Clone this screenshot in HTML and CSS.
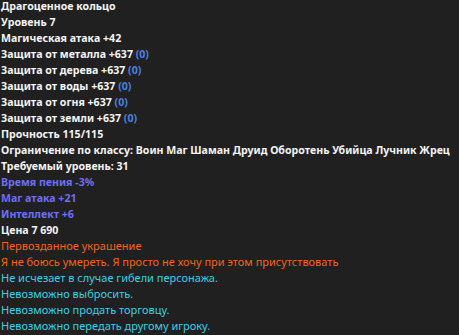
FILE: index.html
```html
<!DOCTYPE html>
<html lang="ru">
<head>
  <meta charset="UTF-8" />
  <title>Драгоценное кольцо</title>
  <link rel="stylesheet" href="styles.css">
</head>
<body>
  <div class="tooltip">
    <p class="b">Драгоценное кольцо</p>
    <p class="b">Уровень 7</p>
    <p class="b">Магическая атака +42</p>
    <p class="b">Защита от металла +637 <span class="add">(0)</span></p>
    <p class="b">Защита от дерева +637 <span class="add">(0)</span></p>
    <p class="b">Защита от воды +637 <span class="add">(0)</span></p>
    <p class="b">Защита от огня +637 <span class="add">(0)</span></p>
    <p class="b">Защита от земли +637 <span class="add">(0)</span></p>
    <p class="b">Прочность 115/115</p>
    <p class="b">Ограничение по классу: Воин Маг Шаман Друид Оборотень Убийца Лучник Жрец</p>
    <p class="b">Требуемый уровень: 31</p>
    <p class="b bonus">Время пения -3%</p>
    <p class="b bonus">Маг атака +21</p>
    <p class="b bonus">Интеллект +6</p>
    <p class="b">Цена 7 690</p>
    <p class="orange">Первозданное украшение</p>
    <p class="orange">Я не боюсь умереть. Я просто не хочу при этом присутствовать</p>
    <p class="cyan">Не исчезает в случае гибели персонажа.</p>
    <p class="cyan">Невозможно выбросить.</p>
    <p class="cyan">Невозможно продать торговцу.</p>
    <p class="cyan">Невозможно передать другому игроку.</p>
  </div>
</body>
</html>
```

FILE: styles.css
```css
body { margin: 0; background: #202020; font-family: "Noto Sans", "Open Sans", sans-serif; font-size: 11px; color: #f4f4f4; overflow: hidden; }
.tooltip { padding: 0 0 0 1px; margin-top: -2px; }
.tooltip p { margin: 0; line-height: 16px; white-space: nowrap; }
.b { font-size: 10.6px; font-weight: bold; }
.add { color: #4a82e0; }
.bonus { color: #6e6ef0; }
.orange { color: #f0651c; }
.cyan { color: #3ccfe0; }
```
